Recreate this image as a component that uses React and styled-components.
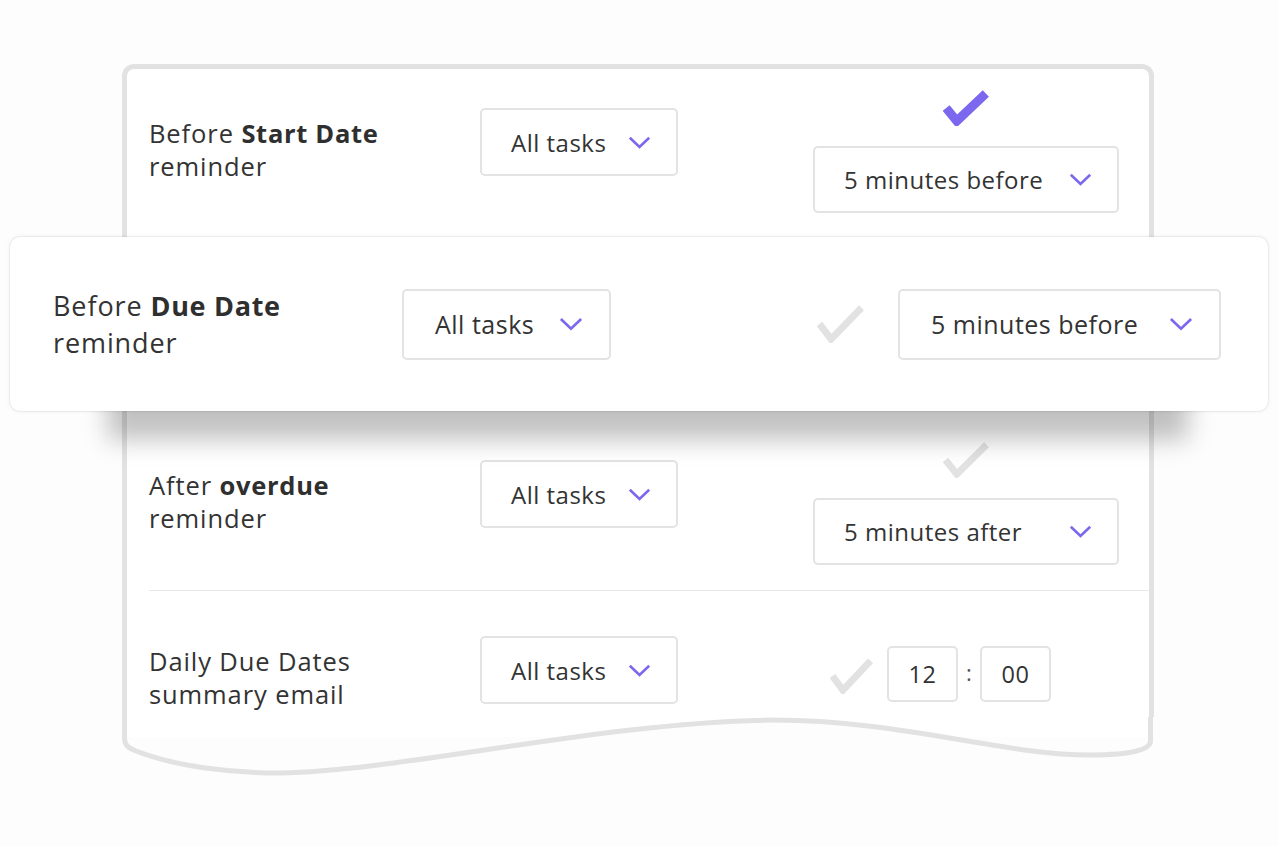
import React from "react";
import styled, { createGlobalStyle } from "styled-components";

const PAGE_BG = "#fdfdfd";
const PURPLE = "#7b68ee";
const LINE = "#e3e3e3";

const Global = createGlobalStyle`
  html, body { margin: 0; padding: 0; background: ${PAGE_BG}; }
  body { font-family: "Open Sans", Lato, sans-serif; color: #333; }
`;

const Stage = styled.div`
  position: relative;
  width: 1278px;
  height: 846px;
  padding: 64px 0 0 122px;
  box-sizing: border-box;
  overflow: hidden;
`;

const Card = styled.div`
  width: 1032px;
  display: flex;
  flex-direction: column;
`;

const Body = styled.div`
  height: 673px;
  box-sizing: border-box;
  background: #fff;
  border: 5px solid #e2e2e2;
  border-bottom: none;
  border-radius: 12px 12px 0 0;
  padding-left: 22px;
`;

const Row = styled.div`
  display: grid;
  grid-template-columns: 331px 333px 306px;
  align-items: start;
  height: ${(p) => p.$h}px;
  box-sizing: border-box;
  padding-top: ${(p) => (p.$first ? 0 : 6)}px;
  border-top: ${(p) => (p.$divider ? "1px solid #e8e8e8" : "none")};
  margin-top: ${(p) => (p.$divider ? -1 : 0)}px;
`;

const Label = styled.div`
  margin-top: 48px;
  font-size: ${(p) => p.$size || 25.5}px;
  line-height: ${(p) => p.$lh || 33}px;
  color: #333;
  letter-spacing: 0.9px;
  white-space: nowrap;
  b { font-weight: 700; color: #2f2f2f; letter-spacing: 0.7px; }
`;

const SelectBox = styled.div`
  width: ${(p) => p.$w}px;
  height: ${(p) => p.$h}px;
  margin-top: ${(p) => p.$mt || 0}px;
  box-sizing: border-box;
  display: flex;
  align-items: center;
  justify-content: space-between;
  padding: 0 ${(p) => p.$pr}px 0 ${(p) => p.$pl}px;
  border: 2px solid ${LINE};
  border-radius: 5px;
  background: #fff;
  font-size: ${(p) => p.$size}px;
  letter-spacing: 0.5px;
  color: #333;
  white-space: nowrap;
`;

const RightCol = styled.div`
  margin-top: 21px;
  display: flex;
  flex-direction: column;
  align-items: center;
  gap: ${(p) => p.$gap}px;
`;

const TimeGroup = styled.div`
  margin-top: 49px;
  padding-left: 17px;
  display: flex;
  align-items: center;
`;

const TimeBox = styled.div`
  width: 71px;
  height: 56px;
  box-sizing: border-box;
  border: 2px solid ${LINE};
  border-radius: 5px;
  display: flex;
  align-items: center;
  justify-content: center;
  font-size: 23.5px;
  letter-spacing: 0.5px;
  color: #333;
  background: #fff;
`;

const Colon = styled.span`
  width: 22px;
  text-align: center;
  font-size: 22px;
  color: #555;
  margin-top: -4px;
`;

const CheckWrap = styled.span`
  display: inline-flex;
  margin-right: ${(p) => p.$mr || 0}px;
  margin-top: ${(p) => p.$mt || 0}px;
`;

const Wave = styled.svg`
  display: block;
  margin-top: -20px;
`;

const Shadow = styled.div`
  position: absolute;
  left: 108px;
  top: 300px;
  width: 1080px;
  height: 140px;
  background: rgba(0, 0, 0, 0.24);
  filter: blur(12px);
`;

const Lifted = styled.div`
  position: absolute;
  left: 10px;
  top: 237px;
  width: 1258px;
  height: 174px;
  box-sizing: border-box;
  padding: 0 47px 0 43px;
  display: flex;
  align-items: center;
  background: #fff;
  border-radius: 10px;
  box-shadow: 0 0 0 1px rgba(0, 0, 0, 0.045), 0 0 5px rgba(0, 0, 0, 0.07);
`;

const LiftedLabel = styled(Label)`
  margin-top: 0;
  width: 349px;
  flex: none;
`;

const LiftedRight = styled.div`
  margin-left: auto;
  display: flex;
  align-items: center;
  gap: 34px;
`;

function Chevron({ w = 23, h = 13 }) {
  return (
    <svg width={w} height={h} viewBox="0 0 23 13" fill="none">
      <path d="M1.8 1.8 L11.5 11 L21.2 1.8" stroke={PURPLE} strokeWidth="2.6" />
    </svg>
  );
}

function Check({ w, h, color, sw }) {
  return (
    <svg width={w} height={h} viewBox={`0 0 ${w} ${h}`} fill="none">
      <polyline
        points={`${sw * 0.35},${h * 0.5} ${w * 0.3},${h - sw * 0.55} ${w - sw * 0.35},${sw * 0.4}`}
        stroke={color}
        strokeWidth={sw}
        strokeLinejoin="miter"
        strokeMiterlimit="10"
      />
    </svg>
  );
}

function Select({ children, w, h = 68, size = 24, pl = 29, pr = 25, mt, cw, ch }) {
  return (
    <SelectBox $w={w} $h={h} $size={size} $pl={pl} $pr={pr} $mt={mt}>
      <span>{children}</span>
      <Chevron w={cw} h={ch} />
    </SelectBox>
  );
}

const WAVE =
  "M2.5 0 L2.5 21 C2.5 28 6 31 14 34 C55 50 110 56 158 56 C280 54 480 5 650 3 C780 3 880 38 968 38 C1012 38 1028.5 32 1028.5 24 L1028.5 0";

export default function App() {
  return (
    <>
      <Global />
      <Stage>
        <Card>
          <Body>
            <Row $first $h={170}>
              <Label>
                Before <b>Start Date</b>
                <br />
                reminder
              </Label>
              <Select w={198} mt={39}>All tasks</Select>
              <RightCol $gap={20}>
                <Check w={46} h={36} color={PURPLE} sw={9} />
                <Select w={306} h={67}>5 minutes before</Select>
              </RightCol>
            </Row>
            <Row $h={176} aria-hidden="true" />
            <Row $h={176}>
              <Label>
                After <b>overdue</b>
                <br />
                reminder
              </Label>
              <Select w={198} mt={39}>All tasks</Select>
              <RightCol $gap={20}>
                <Check w={46} h={36} color="#e2e2e2" sw={7} />
                <Select w={306} h={67}>5 minutes after</Select>
              </RightCol>
            </Row>
            <Row $divider $h={147}>
              <Label>
                Daily Due Dates
                <br />
                summary email
              </Label>
              <Select w={198} mt={39}>All tasks</Select>
              <TimeGroup>
                <CheckWrap $mr={14} $mt={4}>
                  <Check w={43} h={36} color="#e2e2e2" sw={7} />
                </CheckWrap>
                <TimeBox>12</TimeBox>
                <Colon>:</Colon>
                <TimeBox>00</TimeBox>
              </TimeGroup>
            </Row>
          </Body>
          <Wave width="1032" height="63" viewBox="0 0 1032 63">
            <path d={`${WAVE} L1032 0 L1032 63 L0 63 L0 0 Z`} fill={PAGE_BG} />
            <path d={WAVE} fill="none" stroke="#e2e2e2" strokeWidth="5" />
          </Wave>
        </Card>
        <Shadow />
        <Lifted>
          <LiftedLabel $size={27} $lh={37}>
            Before <b>Due Date</b>
            <br />
            reminder
          </LiftedLabel>
          <Select w={209} h={71} size={25} pl={31} pr={26} cw={24} ch={14}>
            All tasks
          </Select>
          <LiftedRight>
            <Check w={47} h={38} color="#e2e2e2" sw={7} />
            <Select w={323} h={71} size={25} pl={31} pr={26} cw={24} ch={14}>
              5 minutes before
            </Select>
          </LiftedRight>
        </Lifted>
      </Stage>
    </>
  );
}
